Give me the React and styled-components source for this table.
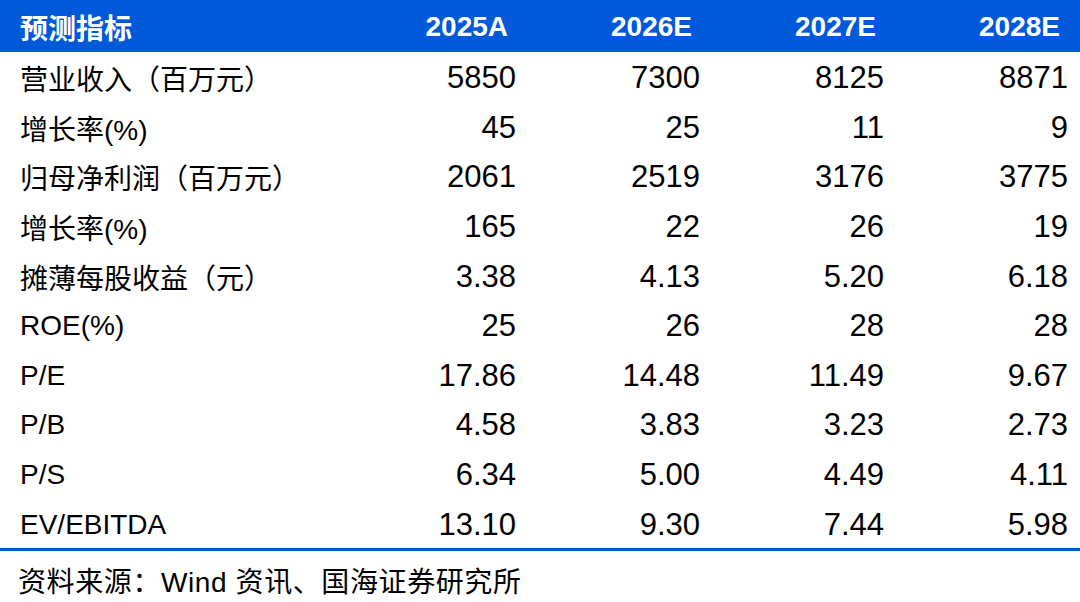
import React from "react";
import styled, { createGlobalStyle } from "styled-components";

const GlobalStyle = createGlobalStyle`
  html, body {
    margin: 0;
    padding: 0;
    background: #ffffff;
  }
  body {
    font-family: "Liberation Sans", Arial, "Noto Sans CJK SC", sans-serif;
  }
`;

const BLUE = "#0059d9";

const Page = styled.div`
  width: 1080px;
  height: 602px;
  background: #fff;
  overflow: hidden;
`;

const Table = styled.div`
  display: grid;
  grid-template-columns: 312px repeat(4, 184px);
  padding: 0 12px 0 20px;
  background: linear-gradient(${BLUE}, ${BLUE}) top / 100% 52px no-repeat;
`;

const Row = styled.div`
  display: contents;
`;

const HeadCell = styled.div`
  height: 52px;
  display: flex;
  align-items: center;
  justify-content: ${({ $left }) => ($left ? "flex-start" : "flex-end")};
  padding-right: ${({ $left }) => ($left ? "0" : "8px")};
  padding-top: 2px;
  box-sizing: border-box;
  color: #fff;
  font-weight: 700;
  font-size: 28px;
`;

const Cell = styled.div`
  height: 49.6px;
  display: flex;
  align-items: center;
  justify-content: ${({ $left }) => ($left ? "flex-start" : "flex-end")};
  padding-top: 3px;
  box-sizing: border-box;
  color: #000;
  font-size: ${({ $left }) => ($left ? "28px" : "31px")};
  white-space: nowrap;
`;

const Rule = styled.div`
  height: 3px;
  background: ${BLUE};
`;

const Source = styled.div`
  padding: 9px 0 0 18px;
  font-size: 28px;
  letter-spacing: 0.6px;
  color: #000;
  white-space: nowrap;
`;

const years = ["2025A", "2026E", "2027E", "2028E"];

const rows = [
  ["营业收入（百万元）", "5850", "7300", "8125", "8871"],
  ["增长率(%)", "45", "25", "11", "9"],
  ["归母净利润（百万元）", "2061", "2519", "3176", "3775"],
  ["增长率(%)", "165", "22", "26", "19"],
  ["摊薄每股收益（元）", "3.38", "4.13", "5.20", "6.18"],
  ["ROE(%)", "25", "26", "28", "28"],
  ["P/E", "17.86", "14.48", "11.49", "9.67"],
  ["P/B", "4.58", "3.83", "3.23", "2.73"],
  ["P/S", "6.34", "5.00", "4.49", "4.11"],
  ["EV/EBITDA", "13.10", "9.30", "7.44", "5.98"],
];

export default function App() {
  return (
    <Page>
      <GlobalStyle />
      <Table>
        <Row>
          <HeadCell $left>预测指标</HeadCell>
          {years.map((y) => (
            <HeadCell key={y}>{y}</HeadCell>
          ))}
        </Row>
        {rows.map((r, i) => (
          <Row key={i}>
            {r.map((v, j) => (
              <Cell key={j} $left={j === 0}>
                {v}
              </Cell>
            ))}
          </Row>
        ))}
      </Table>
      <Rule />
      <Source>资料来源：Wind 资讯、国海证券研究所</Source>
    </Page>
  );
}
